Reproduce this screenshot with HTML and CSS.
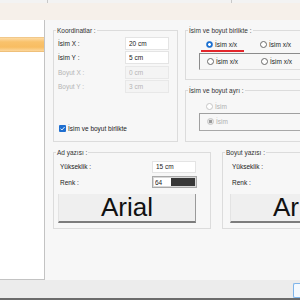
FILE: index.html
```html
<!DOCTYPE html>
<html lang="tr">
<head>
    <meta charset="UTF-8">
    <meta name="viewport" content="width=device-width, initial-scale=1.0">
    <title>Etiket Ayarları</title>
    <link rel="stylesheet" href="styles.css">
</head>
<body>
    <div class="tabs">
        <span class="tab tab-first"></span>
        <span class="tab tab-middle"></span>
        <span class="tab"></span>
    </div>
    <div class="band"></div>

    <div class="main">
        <div class="list">
            <div class="list-item selected"></div>
        </div>

        <div class="content">
            <div class="row-top">
                <div class="group coords">
                    <div class="group-title">Koordinatlar :</div>
                    <div class="field">
                        <label>İsim X :</label>
                        <input type="text" class="input" value="20 cm">
                    </div>
                    <div class="field">
                        <label>İsim Y :</label>
                        <input type="text" class="input" value="5 cm">
                    </div>
                    <div class="field disabled">
                        <label>Boyut X :</label>
                        <input type="text" class="input" value="0 cm" disabled>
                    </div>
                    <div class="field disabled">
                        <label>Boyut Y :</label>
                        <input type="text" class="input" value="3 cm" disabled>
                    </div>
                    <div class="check">
                        <span class="checkbox">
                            <svg width="7" height="7" viewBox="0 0 7 7"><path d="M1.5 3.6 L2.9 5 L5.6 2" fill="none" stroke="#fff" stroke-width="0.9"/></svg>
                        </span>
                        İsim ve boyut birlikte
                    </div>
                </div>

                <div class="side">
                    <div class="group together">
                        <div class="group-title">İsim ve boyut birlikte :</div>
                        <div class="radio-row">
                            <span class="option active"><span class="radio checked"></span>İsim x/x</span>
                            <span class="option"><span class="radio"></span>İsim x/x</span>
                        </div>
                        <div class="radio-box">
                            <span class="option"><span class="radio"></span>İsim x/x</span>
                            <span class="option"><span class="radio"></span>İsim x/x</span>
                        </div>
                    </div>

                    <div class="group separate">
                        <div class="group-title">İsim ve boyut ayrı :</div>
                        <div class="radio-row">
                            <span class="option off"><span class="radio"></span>İsim</span>
                        </div>
                        <div class="radio-box tall">
                            <span class="option off"><span class="radio checked-off"></span>İsim</span>
                        </div>
                    </div>
                </div>
            </div>

            <div class="row-bottom">
                <div class="group text-group">
                    <div class="group-title">Ad yazısı :</div>
                    <div class="field small">
                        <label>Yükseklik :</label>
                        <input type="text" class="input" value="15 cm">
                    </div>
                    <div class="field small">
                        <label>Renk :</label>
                        <div class="color">
                            <input type="text" class="color-value" value="64">
                            <span class="swatch"></span>
                        </div>
                    </div>
                    <button class="font-btn">Arial</button>
                </div>

                <div class="group text-group size-group">
                    <div class="group-title">Boyut yazısı :</div>
                    <div class="field small">
                        <label>Yükseklik :</label>
                        <input type="text" class="input" value="10 cm">
                    </div>
                    <div class="field small">
                        <label>Renk :</label>
                        <div class="color">
                            <input type="text" class="color-value" value="64">
                            <span class="swatch"></span>
                        </div>
                    </div>
                    <button class="font-btn">Arial</button>
                </div>
            </div>
        </div>
    </div>

    <div class="footer">
        <button class="ok-btn"></button>
    </div>
    <div class="footer-line"></div>
</body>
</html>
```

FILE: styles.css
```css
* {
    margin: 0;
    padding: 0;
    box-sizing: border-box;
}

body {
    width: 300px;
    height: 300px;
    overflow: hidden;
    font-family: 'Liberation Sans', Arial, sans-serif;
    font-size: 6.5px;
    color: #2a2a2a;
    background-color: #f7f7f7;
}

/* Top strip */
.tabs {
    display: flex;
    height: 3px;
    background-color: #f3f3f3;
}

.tab-first {
    width: 48px;
    border-right: 1px solid #c9c9c9;
}

.tab-middle {
    width: 184px;
    border-right: 1px solid #c9c9c9;
}

.band {
    height: 17px;
    background-color: #f6f0ea;
}

/* Main area */
.main {
    display: flex;
    height: 260px;
}

.list {
    width: 45px;
    flex-shrink: 0;
    background-color: #ffffff;
    border-right: 1px solid #c3c3c3;
    border-bottom: 1px solid #c3c3c3;
    padding-top: 17px;
}

.list-item {
    height: 15px;
}

.list-item.selected {
    background: linear-gradient(#fddba4, #f9c26c 30%, #f8bd62 70%, #fcd79c);
    border-top: 1px solid #f1c88a;
    border-bottom: 1px solid #efc07a;
}

.content {
    flex: 1;
    overflow: hidden;
    padding: 10px 0 0 8px;
}

/* Group boxes */
.group {
    border: 1px solid #dcdcdc;
    padding: 0 0 0 4px;
    flex-shrink: 0;
}

.group-title {
    width: fit-content;
    margin: -5px 0 0 -2px;
    padding: 0 1px;
    line-height: 9px;
    background-color: #f7f7f7;
    color: #333;
}

.row-top {
    display: flex;
    gap: 7px;
    height: 112px;
}

.row-bottom {
    display: flex;
    gap: 11px;
    margin-top: 10px;
    height: 77px;
}

.coords {
    width: 125px;
    height: 112px;
}

.side {
    display: flex;
    flex-direction: column;
    gap: 10px;
    width: 140px;
    flex-shrink: 0;
}

.together {
    height: 50px;
}

.separate {
    height: 52px;
}

.text-group {
    width: 158px;
    height: 77px;
}

.size-group {
    padding-left: 7px;
}

.size-group .group-title {
    margin-left: -5px;
}

/* Fields */
.field {
    display: flex;
    align-items: center;
    height: 13px;
    margin-top: 1.5px;
}

.coords .field:first-of-type {
    margin-top: 1px;
}

.field label {
    width: 67px;
    color: #222;
}

.input {
    width: 44px;
    height: 100%;
    padding-left: 3px;
    font-family: inherit;
    font-size: 6.5px;
    color: #222;
    background-color: #ffffff;
    border: 1px solid #e4e4e4;
    outline: none;
}

.field.disabled label,
.input:disabled {
    color: #b4b4b4;
}

.input:disabled {
    background-color: #f4f4f4;
    border-color: #e8e8e8;
}

.field.small {
    height: 12px;
    margin-top: 3.5px;
    padding-left: 2px;
}

.field.small:first-of-type {
    margin-top: 2.5px;
}

.field.small label {
    width: 92px;
}

.color {
    display: flex;
    width: 45px;
    height: 12px;
    padding: 1px;
    border: 1px solid #a9a9a9;
    background-color: #d8d8d8;
}

.color-value {
    width: 17px;
    height: 100%;
    padding-left: 1px;
    font-family: inherit;
    font-size: 6.5px;
    color: #222;
    border: none;
    background-color: #ffffff;
    outline: none;
}

.swatch {
    flex: 1;
    background-color: #383838;
}

/* Checkbox */
.check {
    display: flex;
    align-items: center;
    gap: 2px;
    height: 9px;
    margin-top: 30.5px;
    padding-left: 1px;
    color: #222;
}

.checkbox {
    display: flex;
    width: 7px;
    height: 7px;
    border-radius: 1px;
    background-color: #1f6fd0;
}

/* Radio buttons */
.radio-row {
    display: flex;
    height: 9px;
    margin-top: 5px;
    padding-left: 16px;
}

.separate .radio-row {
    margin-top: 7px;
}

.option {
    position: relative;
    display: flex;
    align-items: center;
    gap: 2px;
    width: 54px;
    color: #222;
}

.option.off {
    color: #b0b0b0;
}

.option.active::after {
    content: '';
    position: absolute;
    left: -5px;
    top: 10px;
    width: 43px;
    height: 1.5px;
    background-color: #e3262b;
}

.radio {
    width: 7px;
    height: 7px;
    border-radius: 50%;
    border: 1px solid #6a6a6a;
    background-color: #ffffff;
}

.radio.checked {
    border-color: #1a6fd1;
    background: radial-gradient(circle, #ffffff 0 1.2px, #1a6fd1 1.6px);
}

.option.off .radio {
    border-color: #c6c6c6;
}

.radio.checked-off {
    background: radial-gradient(circle, #9a9a9a 0 1.4px, #e6e6e6 1.8px);
}

.radio-box {
    display: flex;
    align-items: center;
    width: 150px;
    height: 17px;
    margin: 4px 0 0 9px;
    padding-left: 7px;
    border-top: 1px solid #8c8c8c;
    border-left: 1px solid #8c8c8c;
    border-bottom: 1px solid #dedede;
}

.radio-box.tall {
    height: 18px;
    margin-top: 1.5px;
    border-top-color: #a0a0a0;
    border-left-color: #a0a0a0;
    border-bottom-color: #a8a8a8;
}

/* Font buttons */
.font-btn {
    display: block;
    width: 138px;
    height: 29px;
    margin-top: 6px;
    font-family: 'Liberation Sans', Arial, sans-serif;
    font-size: 26px;
    line-height: 27px;
    color: #111;
    background-color: #efefef;
    border: none;
    border-left: 1px solid #e3e3e3;
    border-right: 1px solid #9a9a9a;
    border-bottom: 2px solid #7c7c7c;
}

/* Footer */
.footer {
    display: flex;
    justify-content: flex-end;
    height: 18px;
    padding-top: 3px;
    background-color: #ececec;
}

.ok-btn {
    width: 7px;
    height: 15px;
    border: 1px solid #7eb4ea;
    border-right: none;
    border-radius: 2px 0 0 2px;
    background-color: #f4f9fe;
}

.footer-line {
    height: 2px;
    background-color: #6b6b6b;
}
```
